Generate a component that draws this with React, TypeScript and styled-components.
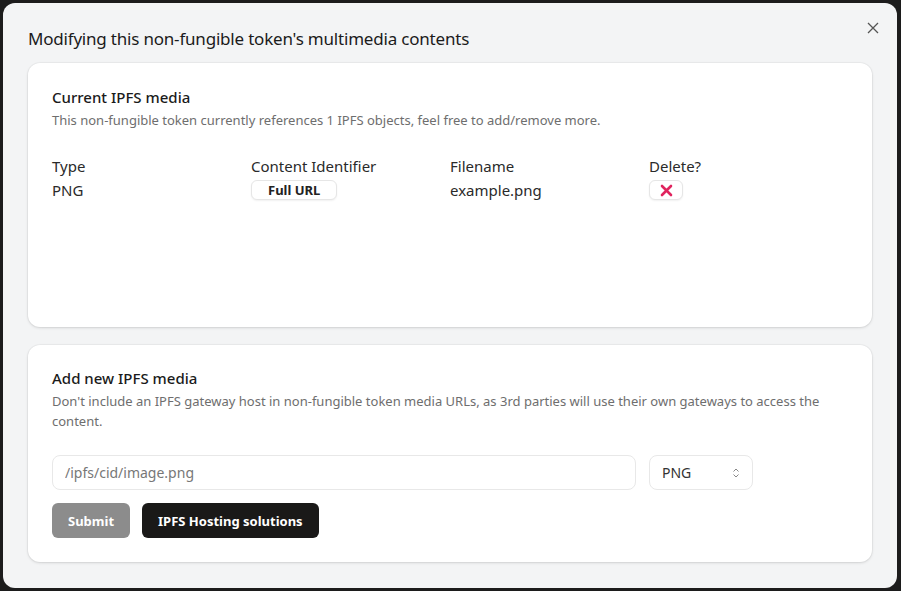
import React from "react";
import styled, { createGlobalStyle } from "styled-components";

const Global = createGlobalStyle`
  html, body { margin: 0; padding: 0; background: #1c1c1c; }
  body { font-family: "Noto Sans", "Open Sans", sans-serif; color: #1f1f1f; }
  * { box-sizing: border-box; }
`;

const Backdrop = styled.div`
  width: 901px;
  height: 591px;
  padding: 3px 4px 3px 3px;
  background: #1c1c1c;
`;

const Modal = styled.div`
  position: relative;
  height: 585px;
  background: #f3f4f5;
  border-radius: 12px;
  padding: 24px 25px 0 25px;
  display: flex;
  flex-direction: column;
`;

const Title = styled.h2`
  margin: 0 0 12px 0;
  font-size: 17px;
  font-weight: 400;
  line-height: 24px;
  color: #1b1b1b;
  letter-spacing: -0.2px;
`;

const Close = styled.button`
  position: absolute;
  top: 17px;
  right: 16px;
  width: 16px;
  height: 16px;
  padding: 0;
  border: none;
  background: none;
  display: flex;
  align-items: center;
  justify-content: center;
  color: #555;
`;

const Card = styled.section<{ $minH?: number }>`
  background: #ffffff;
  border-radius: 12px;
  box-shadow: 0 1px 3px rgba(0, 0, 0, 0.12), 0 0 0 1px rgba(0, 0, 0, 0.03);
  padding: 24px;
  min-height: ${(p) => (p.$minH ? `${p.$minH}px` : "auto")};
  margin-bottom: 18px;
`;

const CardTitle = styled.h3<{ $tight?: boolean }>`
  margin: ${(p) => (p.$tight ? "-1px 0 0 0" : "0")};
  font-size: 15px;
  font-weight: 500;
  line-height: 20px;
  color: #1b1b1b;
`;

const CardDesc = styled.p`
  margin: 3px 0 0 0;
  font-size: 13px;
  line-height: 20px;
  color: #6e6e6e;
`;

const Table = styled.div`
  margin-top: 26px;
  display: grid;
  grid-template-columns: repeat(4, 1fr);
  row-gap: 4px;
  font-size: 15px;
  line-height: 20px;
  color: #2a2a2a;
`;

const Cell = styled.div`
  display: flex;
  align-items: center;
`;

const SmallButton = styled.button`
  height: 20px;
  padding: 0 16px;
  background: #fff;
  border: 1px solid #e6e6e6;
  border-radius: 6px;
  box-shadow: 0 1px 2px rgba(0, 0, 0, 0.06);
  font-family: inherit;
  font-size: 13px;
  font-weight: 700;
  color: #222;
  display: flex;
  align-items: center;
  justify-content: center;
`;

const IconButton = styled(SmallButton)`
  width: 34px;
  padding: 0;
`;

const InputRow = styled.div`
  margin-top: 24px;
  display: flex;
  gap: 13px;
`;

const TextInput = styled.input`
  flex: 0 0 584px;
  height: 35px;
  padding: 0 12px;
  border: 1px solid #e8e8e8;
  border-radius: 8px;
  font-family: inherit;
  font-size: 14px;
  color: #333;
  &::placeholder { color: #777; }
  outline: none;
`;

const Select = styled.div`
  width: 104px;
  height: 35px;
  padding: 0 12px;
  border: 1px solid #e8e8e8;
  border-radius: 8px;
  display: flex;
  align-items: center;
  justify-content: space-between;
  font-size: 14px;
  color: #333;
`;

const ButtonRow = styled.div`
  margin-top: 13px;
  display: flex;
  gap: 12px;
`;

const ActionButton = styled.button<{ $dark?: boolean }>`
  height: 35px;
  padding: 0 16px;
  border: none;
  border-radius: 6px;
  font-family: inherit;
  font-size: 13px;
  font-weight: 700;
  color: #fff;
  background: ${(p) => (p.$dark ? "#1a1918" : "#8c8c8c")};
`;

export default function App() {
  return (
    <>
      <Global />
      <Backdrop>
        <Modal>
          <Title>Modifying this non-fungible token's multimedia contents</Title>
          <Close aria-label="Close">
            <svg width="12" height="12" viewBox="0 0 12 12">
              <path d="M1 1 L11 11 M11 1 L1 11" stroke="#555" strokeWidth="1.3" />
            </svg>
          </Close>
          <Card $minH={264}>
            <CardTitle>Current IPFS media</CardTitle>
            <CardDesc>
              This non-fungible token currently references 1 IPFS objects, feel free to add/remove more.
            </CardDesc>
            <Table>
              <Cell>Type</Cell>
              <Cell>Content Identifier</Cell>
              <Cell>Filename</Cell>
              <Cell>Delete?</Cell>
              <Cell>PNG</Cell>
              <Cell>
                <SmallButton>Full URL</SmallButton>
              </Cell>
              <Cell>example.png</Cell>
              <Cell>
                <IconButton aria-label="Delete">
                  <svg width="13" height="13" viewBox="0 0 13 13">
                    <path d="M2 2 L11 11 M11 2 L2 11" stroke="#e0245e" strokeWidth="2.6" strokeLinecap="round" />
                  </svg>
                </IconButton>
              </Cell>
            </Table>
          </Card>
          <Card>
            <CardTitle $tight>Add new IPFS media</CardTitle>
            <CardDesc>
              Don't include an IPFS gateway host in non-fungible token media URLs, as 3rd parties will use their own gateways to access the content.
            </CardDesc>
            <InputRow>
              <TextInput placeholder="/ipfs/cid/image.png" />
              <Select>
                <span>PNG</span>
                <svg width="8" height="12" viewBox="0 0 8 12">
                  <path d="M1.5 4.5 L4 2 L6.5 4.5 M1.5 7.5 L4 10 L6.5 7.5" stroke="#888" strokeWidth="1" fill="none" />
                </svg>
              </Select>
            </InputRow>
            <ButtonRow>
              <ActionButton>Submit</ActionButton>
              <ActionButton $dark>IPFS Hosting solutions</ActionButton>
            </ButtonRow>
          </Card>
        </Modal>
      </Backdrop>
    </>
  );
}
